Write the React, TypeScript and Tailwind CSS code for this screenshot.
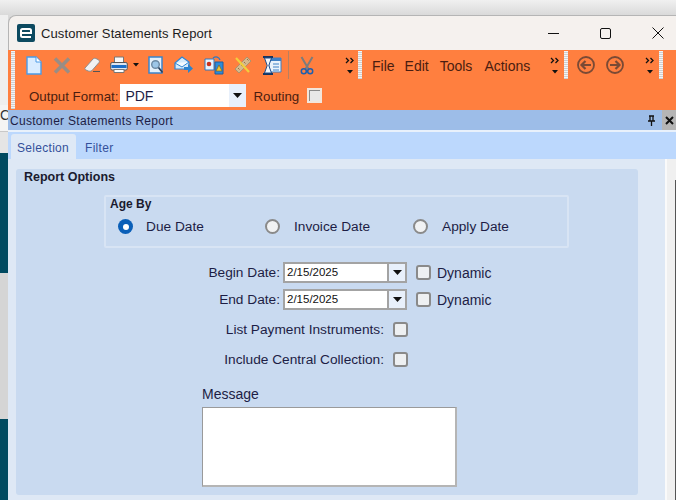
const Grip = () => (
  <div className="w-[4px] self-stretch my-px bg-[repeating-linear-gradient(to_bottom,#f4f4f4_0px,#f4f4f4_1px,#cfcfcf_1px,#cfcfcf_2px)]" />
);

const More = () => (
  <div className="flex flex-col items-center w-[10px]">
    <svg width="10" height="7" viewBox="0 0 10 7" fill="none" stroke="#111" strokeWidth="1.3">
      <path d="M1 1l2.500 2.500L1 6M5.500 1L8 3.500 5.500 6" />
    </svg>
    <svg width="6" height="4" viewBox="0 0 6 4" className="mt-[6px]">
      <path d="M0 0h6L3 3.500z" fill="#111" />
    </svg>
  </div>
);

const DocIcon = () => (
  <svg width="16" height="19" viewBox="0 0 16 19">
    <path d="M1 1h9l5 5v12H1z" fill="#d9ecff" stroke="#4a9be8" strokeWidth="1.400" />
    <path d="M10 1v5h5" fill="#fff" stroke="#4a9be8" />
  </svg>
);

const XIcon = () => (
  <svg width="18" height="17" viewBox="0 0 18 17" stroke="#998d85" strokeWidth="3.500">
    <path d="M2 1.500l14 14M16 1.500l-14 14" />
  </svg>
);

const EraserIcon = () => (
  <svg width="17" height="16" viewBox="0 0 17 16">
    <path d="M1 11l8-9c1-1 2-1 4 0s3 2 2 3.500l-7 8c-1 1-3 1-5 0s-2.500-1.500-2-2.500z" fill="#f1f1f1" stroke="#8d8d8d" />
    <path d="M9 14.500h7" stroke="#555" />
  </svg>
);

const PrinterIcon = () => (
  <svg width="18" height="18" viewBox="0 0 18 18">
    <path d="M4.500 1h9v6h-9z" fill="#f8f8f8" stroke="#777" />
    <rect x="0.700" y="6.500" width="16.600" height="7.500" rx="1.500" fill="#dfe6ee" stroke="#555" />
    <rect x="1.500" y="9" width="15" height="3" fill="#1b6fc9" />
    <path d="M4 13.500h10v3H4z" fill="#fff" stroke="#777" />
  </svg>
);

const PreviewIcon = () => (
  <svg width="16" height="19" viewBox="0 0 16 19">
    <path d="M1 1h13v16H1z" fill="#e4f0fb" stroke="#3b84cc" strokeWidth="1.500" />
    <circle cx="7.500" cy="8.500" r="3.800" fill="#9cc6e8" stroke="#6c8aa5" strokeWidth="1.400" />
    <path d="M10.500 11.500l4 5" stroke="#28415e" strokeWidth="1.800" />
  </svg>
);

const MailIcon = () => (
  <svg width="19" height="18" viewBox="0 0 19 18">
    <path d="M1 7l7-6 7 5v7H1z" fill="#d5ebfb" stroke="#2e86d6" strokeWidth="1.200" />
    <path d="M1 7l7 4 7-5" fill="#f4fbff" stroke="#2e86d6" />
    <path d="M10 11h4V8l5 4.500-5 4.500v-3h-4z" fill="#2b83cf" />
  </svg>
);

const LinksIcon = () => (
  <svg width="20" height="19" viewBox="0 0 20 19">
    <path d="M1 3h9v11H1z" fill="#e9f3fc" stroke="#2e78c0" />
    <circle cx="5" cy="8" r="2.300" fill="#c8321f" />
    <path d="M11 6h8v12h-8z" fill="#2e8bd8" stroke="#1d5fa2" />
    <path d="M15 9l3 6h-6z" fill="#f4c430" stroke="#7d5a10" strokeWidth="0.600" />
    <path d="M9 2c3-2 6-1 7 2" fill="none" stroke="#2e78c0" strokeWidth="1.300" />
  </svg>
);

const RulerIcon = () => (
  <svg width="18" height="18" viewBox="0 0 18 18">
    <path d="M1 13L13 1l4 4L5 17z" fill="#d6b98c" stroke="#b0916a" />
    <path d="M4 12l1.500 1.500M7 9l1.500 1.500M10 6l1.500 1.500M13 3l1.500 1.500" stroke="#8f7350" />
    <path d="M2 2l13 14" stroke="#f2cf3c" strokeWidth="2.200" />
  </svg>
);

const HourglassIcon = () => (
  <svg width="20" height="19" viewBox="0 0 20 19">
    <path d="M7 2h12v14H7z" fill="#e9f2fb" stroke="#3f80c4" />
    <path d="M7 2h12v3H7z" fill="#3f80c4" />
    <path d="M11 8h6M11 11h6M11 14h6" stroke="#3f80c4" />
    <path d="M1 1h10M1 18h10" stroke="#16345f" strokeWidth="1.800" />
    <path d="M2.500 2h7L6.800 9.500l2.700 7.500h-7l2.700-7.500z" fill="#f3f6fa" stroke="#1c4c8c" />
  </svg>
);

const ScissorsIcon = () => (
  <svg width="14" height="19" viewBox="0 0 14 19" fill="none">
    <path d="M1.500 1l7 12M12.500 1l-7 12" stroke="#7c7c7c" strokeWidth="2" />
    <circle cx="3.800" cy="15.200" r="2.500" stroke="#1f5fae" strokeWidth="1.500" />
    <circle cx="10.200" cy="15.200" r="2.500" stroke="#1f5fae" strokeWidth="1.500" />
  </svg>
);

const NavIcon = ({ flip }: { flip?: boolean }) => (
  <svg width="18" height="18" viewBox="0 0 18 18" fill="none" stroke="#7a4a35" strokeWidth="1.800" className={flip ? 'rotate-180' : ''}>
    <circle cx="9" cy="9" r="8" />
    <path d="M14 9H5M8.500 5L4.500 9l4 4" strokeWidth="2.200" />
  </svg>
);

const CheckBox = ({ className = '' }: { className?: string }) => (
  <div className={`w-[15px] h-[15px] rounded-[3px] border-2 border-[#8a8a8a] bg-[#eef0f2] shrink-0 ${className}`} />
);

const Radio = ({ on }: { on?: boolean }) =>
  on ? (
    <div className="w-[15px] h-[15px] rounded-full bg-[#0a5fb8] flex items-center justify-center shrink-0">
      <div className="w-[6px] h-[6px] rounded-full bg-white" />
    </div>
  ) : (
    <div className="w-[15px] h-[15px] rounded-full border-2 border-[#8a8a8a] bg-[#f1f2f3] shrink-0" />
  );

const DropArrow = () => (
  <svg width="9" height="5" viewBox="0 0 9 5">
    <path d="M0 0h9L4.500 5z" fill="#111" />
  </svg>
);

const DateRow = ({ label, className = '' }: { label: string; className?: string }) => (
  <div className={`flex items-center h-[21px] ${className}`}>
    <div className="w-[264px] text-right text-[13.700px] pt-[2px]">{label}</div>
    <div className="ml-[3px] w-[124px] h-[21px] flex border-2 border-[#a3a3a3] bg-white">
      <div className="flex-1 text-[11.500px] leading-[17px] pl-[2px] text-[#111]">2/15/2025</div>
      <div className="w-[18px] bg-[#e8f0fb] border-l-2 border-[#a3a3a3] flex items-center justify-center">
        <DropArrow />
      </div>
    </div>
    <CheckBox className="ml-[9px]" />
    <div className="ml-[6px] pt-[2px]">Dynamic</div>
  </div>
);

const CheckRow = ({ label, className = '' }: { label: string; className?: string }) => (
  <div className={`flex items-center h-[15px] ${className}`}>
    <div className="w-[368px] text-right text-[13.700px] pt-[2px]">{label}</div>
    <CheckBox className="ml-[9px]" />
  </div>
);

const RadioItem = ({ label, on, width, gap }: { label: string; on?: boolean; width: string; gap: string }) => (
  <div className={`flex items-center ${width}`}>
    <Radio on={on} />
    <div className={`${gap} text-[13.700px] pt-[2px]`}>{label}</div>
  </div>
);

export default function App() {
  return (
    <div className="w-[676px] h-[500px] overflow-hidden flex bg-[#e6e6e6] font-['Liberation_Sans',Arial,sans-serif] text-[14px] text-[#1d1d45]">
      {/* desktop behind the window */}
      <div className="w-[8px] shrink-0 flex flex-col text-[#333] overflow-hidden">
        <div className="h-[15px] shrink-0 bg-[linear-gradient(#f0f0f0,#dadada)]" />
        <div className="h-[90px] shrink-0 bg-[#efefef]" />
        <div className="h-[27px] shrink-0 bg-[#f4f4f4] border-b border-[#c8c8c8] overflow-hidden">
          <div className="w-[8px] overflow-hidden leading-[20px] text-[14px] whitespace-nowrap">C</div>
        </div>
        <div className="h-[21px] shrink-0 bg-[#e5e5e5]" />
        <div className="h-[120px] shrink-0 bg-[#004a60]" />
        <div className="h-[146px] shrink-0 bg-[#d5d5d5]" />
        <div className="flex-1 bg-[#004a60]" />
      </div>

      <div className="w-[668px] flex flex-col">
        {/* title bar */}
        <div className="h-[50px] shrink-0 bg-[linear-gradient(#f0f0f0,#dadada_30%,#dadada)] pt-[15px]">
          <div className="h-[35px] bg-[#f5f1ee] rounded-tl-[8px] border-t border-l border-[#b5b5b5] flex items-center text-[#1c1c1c]">
            <div className="ml-[8px] w-[18px] h-[18px] rounded-[2px] bg-[#0d4a60] flex items-center justify-center">
              <svg width="12" height="10" viewBox="0 0 12 10" fill="none" stroke="#fff" strokeWidth="2">
                <path d="M1 5h10V2.500C11 1.500 10.300 1 9.500 1h-7C1.500 1 1 1.500 1 2.500v5C1 8.500 1.500 9 2.500 9H11" />
              </svg>
            </div>
            <div className="ml-[6px] text-[13px] tracking-[0.1px] pt-[2px]">Customer Statements Report</div>
            <div className="ml-auto flex items-center">
              <div className="w-[11px] h-px bg-[#111]" />
              <div className="ml-[41px] w-[11px] h-[11px] rounded-[2px] border border-[#111]" />
              <svg className="ml-[41px] mr-[12px]" width="12" height="12" viewBox="0 0 12 12" stroke="#111">
                <path d="M.5.500l11 11M11.500.500l-11 11" />
              </svg>
            </div>
          </div>
        </div>

        {/* orange toolbar */}
        <div className="h-[60px] shrink-0 bg-[#ff7f3f] flex">
          <div className="ml-[3px] flex"><Grip /></div>
          <div className="flex-1 flex flex-col">
            <div className="h-[30px] flex items-center text-[#4a1d10] shrink-0">
              <div className="ml-[11px]"><DocIcon /></div>
              <div className="ml-[11px]"><XIcon /></div>
              <div className="ml-[13px]"><EraserIcon /></div>
              <div className="ml-[9px]"><PrinterIcon /></div>
              <svg className="ml-[5px]" width="6" height="4" viewBox="0 0 6 4"><path d="M0 0h6L3 3.500z" fill="#111" /></svg>
              <div className="ml-[9px]"><PreviewIcon /></div>
              <div className="ml-[10px]"><MailIcon /></div>
              <div className="ml-[11px]"><LinksIcon /></div>
              <div className="ml-[10px]"><RulerIcon /></div>
              <div className="ml-[10px]"><HourglassIcon /></div>
              <div className="ml-[6px] w-px self-stretch my-px bg-[#b9805f]" />
              <div className="ml-[11px]"><ScissorsIcon /></div>
              <div className="ml-[31px]"><More /></div>
              <div className="ml-[3px] self-stretch flex"><Grip /></div>
              <div className="ml-[10px] pt-[2px]">File</div>
              <div className="ml-[10px] pt-[2px]">Edit</div>
              <div className="ml-[11px] pt-[2px]">Tools</div>
              <div className="ml-[12px] pt-[2px]">Actions</div>
              <div className="ml-[20px]"><More /></div>
              <div className="ml-[4px] self-stretch flex"><Grip /></div>
              <div className="ml-[9px]"><NavIcon /></div>
              <div className="ml-[11px]"><NavIcon flip /></div>
              <div className="ml-[21px]"><More /></div>
              <div className="ml-[4px] self-stretch flex"><Grip /></div>
            </div>
            <div className="flex items-center h-[23px] mt-[4px] text-[#4a1d10] text-[13.300px]">
              <div className="ml-[14px] pt-[2px]">Output Format:</div>
              <div className="ml-[2px] w-[126px] h-[23px] bg-white flex items-center text-[#1d1d45] text-[14px]">
                <div className="flex-1 pl-[5px] pt-[2px]">PDF</div>
                <div className="w-[17px] h-full bg-[#e8f0fb] flex items-center justify-center"><DropArrow /></div>
              </div>
              <div className="ml-[7px] pt-[2px]">Routing</div>
              <div className="ml-[8px] w-[15px] h-[15px] border-2 border-[#f2e6dc] bg-[#e8e8e8] shadow-[inset_1px_1px_0_#8a8a8a]" />
            </div>
          </div>
        </div>

        {/* panel title */}
        <div className="h-[20px] shrink-0 bg-[#9dbde8] flex items-center pl-[2px] text-[12px] tracking-[0.3px]">
          <div className="pt-[2px]">Customer Statements Report</div>
          <svg className="ml-auto mr-[6px]" width="9" height="11" viewBox="0 0 9 11">
            <path d="M2 1h5M3 1v5M6 1v5M1 6h7M4.500 6v5" stroke="#111" strokeWidth="1.300" fill="none" />
          </svg>
          <div className="w-[14px] h-full bg-[#b5b5b5] flex items-center justify-center">
            <svg width="9" height="9" viewBox="0 0 9 9" stroke="#111" strokeWidth="2"><path d="M1 1l7 7M8 1l-7 7" /></svg>
          </div>
        </div>

        {/* tabs */}
        <div className="h-[29px] shrink-0 bg-[#bcd8fd] border-t-2 border-[#e9f1fb] flex items-end pl-[3px] text-[12px] text-[#34509b] tracking-[0.3px]">
          <div className="w-[65px] h-[25px] bg-[#dfe9f6] rounded-t-[3px] pl-[6px] pt-[5px]">Selection</div>
          <div className="ml-[9px] h-[22px] leading-[22px]">Filter</div>
        </div>

        {/* form */}
        <div className="flex-1 flex min-h-0">
          <div className="w-[657px] bg-[#dee8f5] pt-[10px] pl-[8px] pr-[27px]">
            <div className="h-[326px] bg-[#c9daf0] rounded-[3px] flex flex-col">
              <div className="pl-[8px] pt-[2px] font-bold text-[12.500px] text-[#1a1a2e] leading-[13px]">Report Options</div>
              <div className="ml-[88px] mt-[11px] w-[465px] h-[53px] border-2 border-[#d8e4f4] rounded-[2px] pl-[4px] shrink-0">
                <div className="font-bold text-[12px] text-[#1a1a2e] leading-[13px] pt-[1px]">Age By</div>
                <div className="flex items-center ml-[8px] mt-[8px] h-[15px]">
                  <RadioItem label="Due Date" on width="w-[147px]" gap="ml-[13px]" />
                  <RadioItem label="Invoice Date" width="w-[148px]" gap="ml-[14px]" />
                  <RadioItem label="Apply Date" width="w-[147px]" gap="ml-[14px]" />
                </div>
              </div>
              <DateRow label="Begin Date:" className="mt-[14px]" />
              <DateRow label="End Date:" className="mt-[6px]" />
              <CheckRow label="List Payment Instruments:" className="mt-[12px]" />
              <CheckRow label="Include Central Collection:" className="mt-[15px]" />
              <div className="ml-[186px] mt-[19px] leading-[16px]">Message</div>
              <div className="ml-[186px] mt-[5px] w-[255px] h-[80px] bg-white border-t border-l border-r-2 border-b-2 border-t-[#9a9a9a] border-l-[#9a9a9a] border-r-[#b5b5b5] border-b-[#b5b5b5]" />
            </div>
          </div>
          <div className="w-[2px] bg-[#fafafa]" />
          <div className="flex-1 flex flex-col bg-[#f0f0f0]">
            <div className="h-[21px] shrink-0" />
            <div className="flex-1 border-r border-[#555]" />
          </div>
        </div>
      </div>
    </div>
  );
}
